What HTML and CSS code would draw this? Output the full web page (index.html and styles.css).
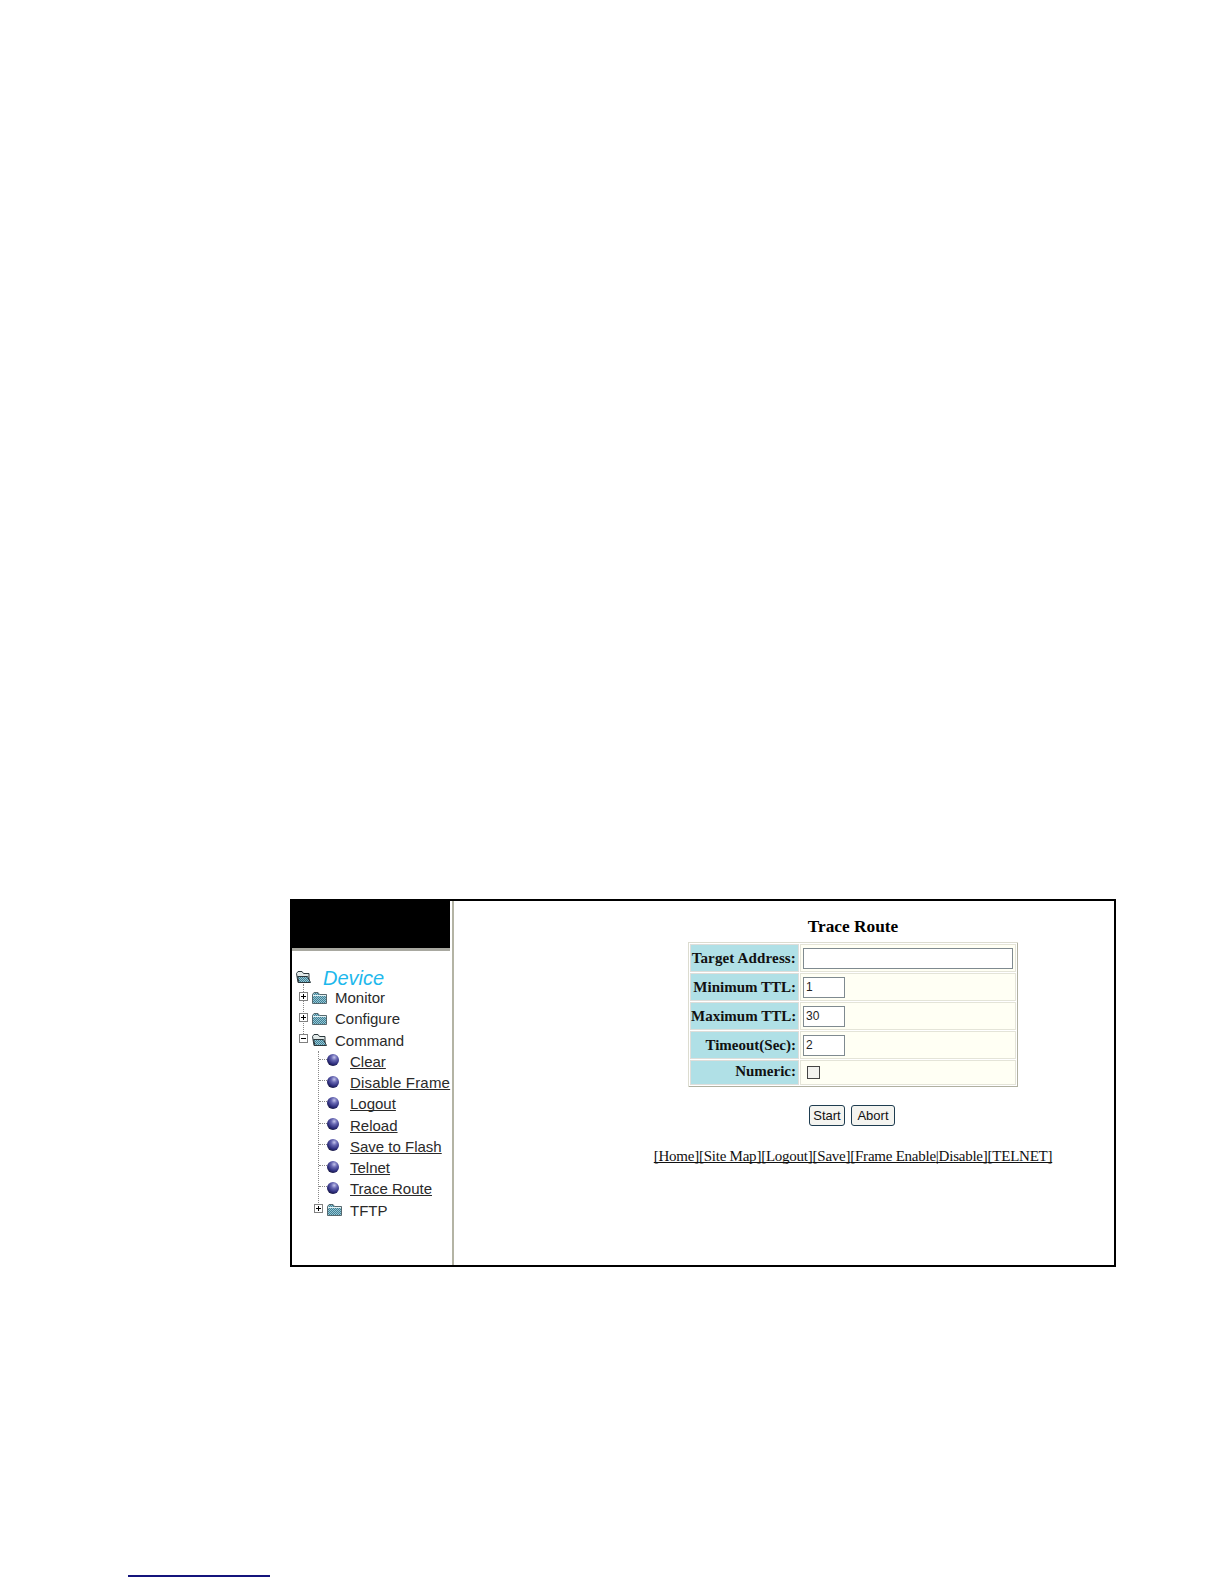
FILE: index.html
```html
<!DOCTYPE html>
<html lang="en">
<head>
<meta charset="utf-8">
<title>Trace Route</title>
<link rel="stylesheet" href="styles.css">
</head>
<body>
<svg class="defs" width="0" height="0" aria-hidden="true">
  <defs>
    <radialGradient id="ball" cx="0.6" cy="0.28" r="0.8">
      <stop offset="0" stop-color="#c4c4ec"/>
      <stop offset="0.3" stop-color="#6a6ab4"/>
      <stop offset="0.7" stop-color="#2c2c7c"/>
      <stop offset="1" stop-color="#10102c"/>
    </radialGradient>
    <pattern id="dith" width="2" height="2" patternUnits="userSpaceOnUse">
      <rect width="2" height="2" fill="#98c8d4"/>
      <rect width="1" height="1" fill="#3f7f96"/>
      <rect x="1" y="1" width="1" height="1" fill="#3f7f96"/>
    </pattern>
    <symbol id="folder" viewBox="0 0 15 12">
      <path d="M.5 2.5 2 .5H6L7.5 2.5H14.5V11.5H.5Z" fill="url(#dith)" stroke="#56686e"/>
      <path d="M1 3.5H14" stroke="#e4f2f4"/>
    </symbol>
    <symbol id="folder-open" viewBox="0 0 15 12">
      <path d="M.5 2.5 2 .5H6L7.5 2.5H13V11.5H2Z" fill="#e0e8e8" stroke="#2c383c"/>
      <path d="M1.5 5.5H11.5L14.5 11.5H3Z" fill="url(#dith)" stroke="#2c383c"/>
    </symbol>
    <symbol id="plus" viewBox="0 0 9 9">
      <rect x="0.5" y="0.5" width="8" height="8" fill="#fff" stroke="#808080"/>
      <path d="M2 4.5H7M4.5 2V7" stroke="#000"/>
    </symbol>
    <symbol id="minus" viewBox="0 0 9 9">
      <rect x="0.5" y="0.5" width="8" height="8" fill="#fff" stroke="#808080"/>
      <path d="M2 4.5H7" stroke="#000"/>
    </symbol>
    <symbol id="bullet" viewBox="0 0 12 12">
      <circle cx="6" cy="6" r="6" fill="url(#ball)"/>
    </symbol>
  </defs>
</svg>
<main class="frame">
  <aside class="sidebar">
    <div class="banner"></div>
    <nav class="tree">
      <div class="root"><svg class="ic-folder root-ic"><use href="#folder-open"/></svg><span class="device">Device</span></div>
      <div class="branch">
        <div class="row top"><svg class="ic-box"><use href="#plus"/></svg><svg class="ic-folder"><use href="#folder"/></svg><span class="lab">Monitor</span></div>
        <div class="row top"><svg class="ic-box"><use href="#plus"/></svg><svg class="ic-folder"><use href="#folder"/></svg><span class="lab">Configure</span></div>
        <div class="row top"><svg class="ic-box"><use href="#minus"/></svg><svg class="ic-folder"><use href="#folder-open"/></svg><span class="lab">Command</span></div>
        <div class="children">
          <div class="row leaf"><svg class="ic-ball"><use href="#bullet"/></svg><a href="#">Clear</a></div>
          <div class="row leaf"><svg class="ic-ball"><use href="#bullet"/></svg><a class="spaced" href="#">Disable Frame</a></div>
          <div class="row leaf"><svg class="ic-ball"><use href="#bullet"/></svg><a href="#">Logout</a></div>
          <div class="row leaf"><svg class="ic-ball"><use href="#bullet"/></svg><a href="#">Reload</a></div>
          <div class="row leaf"><svg class="ic-ball"><use href="#bullet"/></svg><a href="#">Save to Flash</a></div>
          <div class="row leaf"><svg class="ic-ball"><use href="#bullet"/></svg><a href="#">Telnet</a></div>
          <div class="row leaf"><svg class="ic-ball"><use href="#bullet"/></svg><a href="#">Trace Route</a></div>
          <div class="row sub"><svg class="ic-box"><use href="#plus"/></svg><svg class="ic-folder"><use href="#folder"/></svg><span class="lab">TFTP</span></div>
        </div>
      </div>
    </nav>
  </aside>
  <section class="content">
    <h1 class="title">Trace Route</h1>
    <table class="form">
      <tr><th class="target">Target Address:</th><td><input class="wide" type="text"></td></tr>
      <tr><th>Minimum TTL:</th><td><input class="small" type="text" value="1"></td></tr>
      <tr><th>Maximum TTL:</th><td><input class="small" type="text" value="30"></td></tr>
      <tr><th>Timeout(Sec):</th><td><input class="small" type="text" value="2"></td></tr>
      <tr class="last"><th>Numeric:</th><td><span class="check"></span></td></tr>
    </table>
    <div class="buttons"><button class="btn-start" type="button">Start</button><button class="btn-abort" type="button">Abort</button></div>
    <p class="links"><a href="#">[Home]</a><a href="#">[Site Map]</a><a href="#">[Logout]</a><a href="#">[Save]</a><a href="#">[Frame Enable</a><a href="#">|Disable]</a><a href="#">[TELNET]</a></p>
  </section>
</main>
<div class="footnote-rule"></div>
</body>
</html>
```
FILE: styles.css
```css
html, body { margin: 0; padding: 0; background: #fff; }
body { width: 1224px; height: 1584px; overflow: hidden; padding-top: 899px; box-sizing: border-box; color: #111; }
.defs { position: absolute; }
.frame { display: flex; box-sizing: border-box; width: 826px; height: 368px; margin-left: 290px; border: 2px solid #000; background: #fff; }
.sidebar { width: 162px; flex: none; box-sizing: border-box; padding-right: 2px; border-right: 2px solid #b4b4a4; font: 15px/21.1px "Liberation Sans", Arial, sans-serif; overflow: hidden; }
.banner { height: 47px; background: #000; border-bottom: 3px solid #a8a8a0; }
.tree { padding: 17px 0 0 3px; color: #2a2a2a; }
.root { display: flex; align-items: center; height: 19px; padding-left: 1px; }
.root-ic { margin-right: 12px; margin-top: -1px; }
.device { font-size: 20px; font-style: italic; color: #1db8ec; margin-top: 3px; }
.branch { position: relative; }
.branch::before { content: ""; position: absolute; left: 8px; top: -3px; height: 50px; border-left: 1px dotted #888; }
.row { display: flex; align-items: center; height: 21.25px; white-space: nowrap; }
.top { padding-left: 4px; }
.ic-box { width: 9px; height: 9px; flex: none; margin-right: 4px; margin-top: -3px; position: relative; }
.ic-folder { width: 15px; height: 12px; flex: none; }
.top .lab { margin-left: 8px; }
.children { position: relative; }
.children::before { content: ""; position: absolute; left: 23px; top: 0; height: 152px; border-left: 1px dotted #888; }
.leaf { padding-left: 32px; position: relative; }
.leaf::before { content: ""; position: absolute; left: 24px; top: 8px; width: 8px; border-top: 1px dotted #888; }
.ic-ball { width: 12px; height: 12px; flex: none; margin-right: 11px; margin-top: -2px; }
.leaf a { color: #2a2a2a; text-decoration: underline; text-decoration-skip-ink: none; }
.leaf a.spaced { letter-spacing: 0.2px; }
.sub { padding-left: 19px; }
.sub .lab { margin-left: 8px; }
.content { flex: 1; display: flex; flex-direction: column; align-items: center; padding-left: 138px; box-sizing: border-box; font-family: "Liberation Serif", "Times New Roman", serif; }
.title { margin: 16px 0 0; font-size: 17.3px; line-height: 20px; font-weight: bold; color: #000; }
.form { margin-top: 5px; border-collapse: separate; border-spacing: 3px; width: 330px; table-layout: fixed; background: #fff; box-shadow: inset 1px 1px 0 #dcdcd0, inset -1px -1px 0 #b0b0a0; }
.form th, .form td { padding: 0; height: 26px; box-sizing: border-box; }
.form .last th, .form .last td { height: 23px; }
.form .last th { padding-bottom: 2px; }
.form th { width: 107px; background: #b0e0e6; text-align: right; font-size: 15px; padding-right: 2px; color: #111; white-space: nowrap; box-shadow: 0 0 0 1px #dededa; }
.form th.target { letter-spacing: 0.15px; }
.form td { background: #fffff4; box-shadow: 0 0 0 1px #e4e4d8; padding-left: 2px; }
.form input { display: block; box-sizing: border-box; height: 21px; border: 1px solid #7f8a90; padding: 0 2px; background: #fff; font: 12px "Liberation Sans", Arial, sans-serif; color: #222; }
.wide { width: 210px; }
.small { width: 42px; }
.check { display: block; width: 13px; height: 13px; box-sizing: border-box; margin-left: 4px; border: 1px solid #444; background: #f2f2ee; }
.buttons { display: flex; gap: 6px; margin-top: 18px; margin-left: -2px; }
.buttons button { box-sizing: border-box; height: 21px; padding: 0; border: 1px solid #1e3c50; border-radius: 3px; background: #f4f4f0; font: 13px "Liberation Sans", Arial, sans-serif; color: #111; }
.btn-start { width: 36px; }
.btn-abort { width: 44px; }
.links { margin: 20px 0 0; font-size: 15px; letter-spacing: -0.24px; line-height: 20px; white-space: nowrap; }
.links a { color: #111; text-decoration: underline; text-decoration-skip-ink: none; }
.footnote-rule { width: 142px; height: 2px; margin: 308px 0 0 128px; background: #14147c; }
```
